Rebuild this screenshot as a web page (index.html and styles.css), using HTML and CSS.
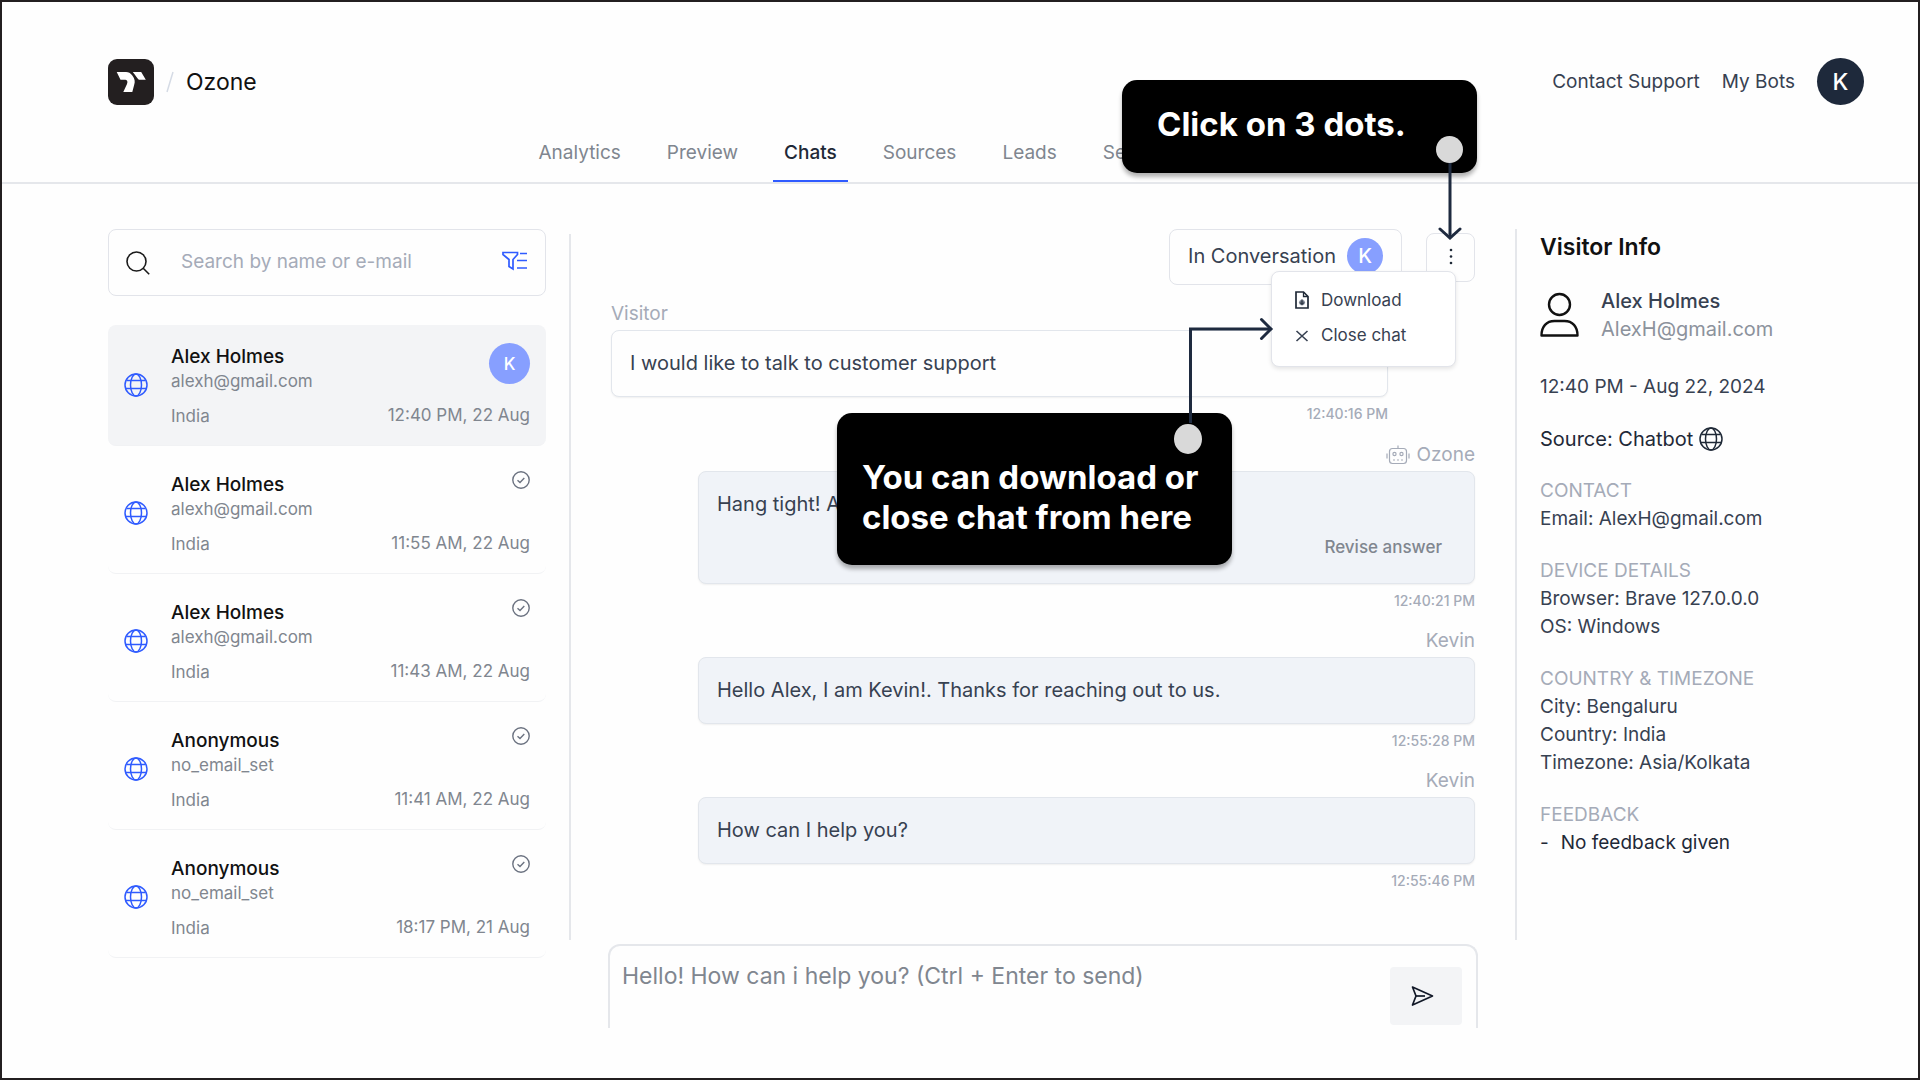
FILE: index.html
```html
<!DOCTYPE html>
<html lang="en">
<head>
<meta charset="utf-8">
<meta name="viewport" content="width=device-width, initial-scale=1">
<title>Ozone - Chats</title>
<link rel="stylesheet" href="styles.css">
</head>
<body>
<svg class="sprite" aria-hidden="true">
  <symbol id="globe" viewBox="0 0 24 24">
    <g fill="none" stroke="currentColor" stroke-width="1.500">
      <circle cx="12" cy="12" r="11"/>
      <ellipse cx="12" cy="12" rx="5.500" ry="11"/>
      <path d="M2.500 7.500h19M1.500 15.500h21"/>
    </g>
  </symbol>
  <symbol id="done" viewBox="0 0 18 18">
    <g fill="none" stroke="currentColor" stroke-width="1.400">
      <circle cx="9" cy="9" r="8.200"/>
      <path d="M5.500 9.200l2.500 2.300 4.300-4.500"/>
    </g>
  </symbol>
</svg>
<header class="header">
  <div class="topbar">
    <a class="brand" href="#" aria-label="Home">
      <svg class="logo" viewBox="0 0 46 46">
        <rect width="46" height="46" rx="9" fill="#231f20"/>
        <path d="M8.700 13H18c2.500 0 4.500 1 6.500 3.800 2.300 3.200 2.800 5.700 1.700 9L24.300 33h-9l3.700-8c.9-2 .3-4.200-1.500-4.200H12.500z" fill="#fff"/>
        <path d="M24.800 13h8.400l4.600 7.800h-6.600c-1.700-.8-3.200-4-6.400-7.800z" fill="#fff"/>
      </svg>
    </a>
    <svg class="slash" viewBox="0 0 8 22"><path d="M7 1L1 21" stroke="#d5dbe5" stroke-width="1.500"/></svg>
    <span class="bot-name">Ozone</span>
    <nav class="account">
      <a href="#">Contact Support</a>
      <a href="#">My Bots</a>
      <button class="avatar" type="button">K</button>
    </nav>
  </div>
  <nav class="tabs">
    <a href="#">Analytics</a>
    <a href="#">Preview</a>
    <a class="active" href="#">Chats</a>
    <a href="#">Sources</a>
    <a href="#">Leads</a>
    <a href="#">Settings</a>
  </nav>
</header>
<main class="main">
  <aside class="sidebar">
    <div class="search">
      <svg class="search-icon" viewBox="0 0 24 24" fill="none" stroke="#1a1a1a" stroke-width="1.600"><circle cx="10.500" cy="10.500" r="9.500"/><path d="M17.200 17.200l6 6"/></svg>
      <input type="text" aria-label="Search chats" placeholder="Search by name or e-mail">
      <button class="filter" type="button" aria-label="Filter">
        <svg viewBox="0 0 26 20" fill="none" stroke="#2f5bff" stroke-width="1.700"><path d="M1 1.500h14.500v2L11 8.500V18L7 15.500v-7L1 3.500z"/><path d="M18 2.500h7M15 9.500h10M15 17h10"/></svg>
      </button>
    </div>
    <ul class="chats">
      <li class="chat selected">
        <svg class="globe"><use href="#globe"/></svg>
        <div class="who"><strong>Alex Holmes</strong><span>alexh@gmail.com</span><span class="place">India</span></div>
        <div class="state"><span class="badge">K</span><time>12:40 PM, 22 Aug</time></div>
      </li>
      <li class="chat">
        <svg class="globe"><use href="#globe"/></svg>
        <div class="who"><strong>Alex Holmes</strong><span>alexh@gmail.com</span><span class="place">India</span></div>
        <div class="state"><svg class="done"><use href="#done"/></svg><time>11:55 AM, 22 Aug</time></div>
      </li>
      <li class="chat">
        <svg class="globe"><use href="#globe"/></svg>
        <div class="who"><strong>Alex Holmes</strong><span>alexh@gmail.com</span><span class="place">India</span></div>
        <div class="state"><svg class="done"><use href="#done"/></svg><time>11:43 AM, 22 Aug</time></div>
      </li>
      <li class="chat">
        <svg class="globe"><use href="#globe"/></svg>
        <div class="who"><strong>Anonymous</strong><span>no_email_set</span><span class="place">India</span></div>
        <div class="state"><svg class="done"><use href="#done"/></svg><time>11:41 AM, 22 Aug</time></div>
      </li>
      <li class="chat">
        <svg class="globe"><use href="#globe"/></svg>
        <div class="who"><strong>Anonymous</strong><span>no_email_set</span><span class="place">India</span></div>
        <div class="state"><svg class="done"><use href="#done"/></svg><time>18:17 PM, 21 Aug</time></div>
      </li>
    </ul>
  </aside>
  <section class="thread">
    <div class="toolbar">
      <div class="status">In Conversation <span class="badge">K</span></div>
      <button class="more" type="button" aria-label="More options">
        <svg viewBox="0 0 4 18" fill="#1f2937"><circle cx="2" cy="2" r="1.300"/><circle cx="2" cy="8.500" r="1.300"/><circle cx="2" cy="15" r="1.300"/></svg>
      </button>
      <div class="menu">
        <button type="button">
          <svg viewBox="0 0 14 18" fill="none" stroke="#1f2937" stroke-width="1.700"><path d="M1 1h7.500L13 5.500V17H1z"/><path d="M8.500 1v4.500H13" stroke-width="1.300"/><circle cx="7" cy="11.500" r="2.600" fill="#6b7280" stroke="#9ca3af" stroke-width="1"/><path d="M7 8.500v5M5 11.500l2 2 2-2" stroke-width="1"/></svg>
          Download
        </button>
        <button type="button">
          <svg viewBox="0 0 14 18" fill="none" stroke="#374151" stroke-width="1.600"><path d="M1.500 5l11 10M12.500 5l-11 10"/></svg>
          Close chat
        </button>
      </div>
      <div class="callout callout-dots">Click on 3 dots.</div>
      <div class="callout callout-menu">You can download or<br>close chat from here</div>
      <svg class="arrow arrow-dots" viewBox="0 0 28 104" fill="none" stroke="#1e2a3f" stroke-width="3"><path d="M14 26v75"/><path d="M4 93l10 9 10-9" stroke-linecap="round"/><circle cx="13.500" cy="13.500" r="13.500" fill="#d9d9d9" stroke="none"/></svg>
      <svg class="arrow arrow-menu" viewBox="0 0 100 140" fill="none" stroke="#1e2a3f" stroke-width="3"><path d="M16.500 107V13H97"/><path d="M87.500 3.500L97 13 87.500 22.500" stroke-linecap="round"/><ellipse cx="14" cy="123" rx="14" ry="15" fill="#d9d9d9" stroke="none"/></svg>
    </div>
    <article class="message visitor">
      <h3>Visitor</h3>
      <p class="bubble">I would like to talk to customer support</p>
      <time>12:40:16 PM</time>
    </article>
    <article class="message">
      <h3><svg class="robot" viewBox="0 0 24 20" fill="none" stroke="currentColor" stroke-width="1.200"><rect x="3.500" y="3.500" width="17" height="15" rx="3"/><path d="M12 .5v3M1 8.500v5M23 8.500v5M7 15h2M11 15h2M15 15h2"/><circle cx="8.500" cy="9" r="1.600"/><circle cx="15.500" cy="9" r="1.600"/></svg>Ozone</h3>
      <div class="bubble">
        <p>Hang tight! A</p>
        <button class="revise" type="button">Revise answer</button>
      </div>
      <time>12:40:21 PM</time>
    </article>
    <article class="message">
      <h3>Kevin</h3>
      <p class="bubble">Hello Alex, I am Kevin!. Thanks for reaching out to us.</p>
      <time>12:55:28 PM</time>
    </article>
    <article class="message">
      <h3>Kevin</h3>
      <p class="bubble">How can I help you?</p>
      <time>12:55:46 PM</time>
    </article>
  </section>
  <aside class="info">
    <h2>Visitor Info</h2>
    <div class="person">
      <svg viewBox="0 0 40 46" fill="none" stroke="#111" stroke-width="2.400"><circle cx="19.500" cy="12.500" r="10.500"/><path d="M1.500 43.500c0-9 5-14.500 13-14.500h10c8 0 13 5.500 13 14.500z" stroke-linejoin="round"/></svg>
      <div><strong>Alex Holmes</strong><span>AlexH@gmail.com</span></div>
    </div>
    <p>12:40 PM - Aug 22, 2024</p>
    <p class="source">Source: Chatbot <svg class="globe"><use href="#globe"/></svg></p>
    <section><h3>CONTACT</h3><p>Email: AlexH@gmail.com</p></section>
    <section><h3>DEVICE DETAILS</h3><p>Browser: Brave 127.0.0.0</p><p>OS: Windows</p></section>
    <section><h3>COUNTRY &amp; TIMEZONE</h3><p>City: Bengaluru</p><p>Country: India</p><p>Timezone: Asia/Kolkata</p></section>
    <section><h3>FEEDBACK</h3><p class="feedback"><span>-</span><span>No feedback given</span></p></section>
  </aside>
  <form class="composer">
    <textarea aria-label="Message" placeholder="Hello! How can i help you? (Ctrl + Enter to send)"></textarea>
    <button type="button" aria-label="Send">
      <svg viewBox="0 0 24 22" fill="none" stroke="#111827" stroke-width="1.700" stroke-linejoin="round"><path d="M2.500 2L22.500 11 2.500 20 6 11z"/><path d="M6 11h9"/></svg>
    </button>
  </form>
</main>
</body>
</html>
```
FILE: styles.css
```css
* {
  box-sizing: border-box;
}

body {
  margin: 0;
  min-height: 100vh;
  border: 2px solid #231f20;
  background: #fefefe;
  color: #374151;
  font-family: Inter, "Liberation Sans", sans-serif;
  font-size: 19px;
  line-height: 24px;
}

h2, h3, p, ul {
  margin: 0;
  padding: 0;
  font-size: inherit;
  font-weight: 400;
}

a {
  color: inherit;
  text-decoration: none;
}

button {
  padding: 0;
  border: 0;
  background: none;
  color: inherit;
  font: inherit;
}

svg {
  display: block;
}

.sprite {
  position: absolute;
  width: 0;
  height: 0;
}

/* Header */

.header {
  border-bottom: 2px solid #e5e7eb;
}

.topbar {
  display: flex;
  align-items: center;
  padding: 56px 54px 0 106px;
}

.logo {
  width: 46px;
  height: 46px;
}

.slash {
  width: 8px;
  height: 22px;
  margin: 0 12px;
}

.bot-name {
  color: #111;
  font-size: 23px;
}

.account {
  display: flex;
  align-items: center;
  gap: 22px;
  margin-left: auto;
}

.avatar {
  width: 47px;
  height: 47px;
  border-radius: 50%;
  background: #1e293b;
  color: #fff;
  font-size: 23px;
  font-weight: 500;
}

.tabs {
  display: flex;
  justify-content: center;
  gap: 24px;
  padding-right: 206px;
  margin-top: 23px;
  color: #80868f;
}

.tabs a {
  padding: 13px 11px 15px;
  border-bottom: 2px solid transparent;
}

.tabs .active {
  border-color: #2f5bff;
  color: #1f2937;
  font-weight: 500;
}

/* Page grid */

.main {
  display: grid;
  grid-template-columns: 438px minmax(0, 1fr) 403px;
  grid-template-rows: auto auto;
  padding: 45px 0 50px 106px;
}

.sidebar {
  grid-row: span 2;
}

.badge {
  display: grid;
  place-items: center;
  width: 41px;
  height: 41px;
  border-radius: 50%;
  background: #879fff;
  color: #fff;
  font-weight: 500;
}

/* Chat list */

.search {
  display: flex;
  align-items: center;
  height: 67px;
  padding: 0 17px;
  border: 1px solid #e2e4ea;
  border-radius: 8px;
}

.search-icon {
  flex: none;
  width: 24px;
  height: 24px;
}

.search input {
  flex: 1;
  min-width: 0;
  padding: 0 0 2px 31px;
  border: 0;
  outline: 0;
  background: none;
  font: inherit;
}

.search input::placeholder {
  color: #a5abb8;
}

.filter {
  padding-bottom: 4px;
}

.filter svg {
  width: 26px;
  height: 20px;
}

.chats {
  display: grid;
  gap: 7px;
  margin-top: 29px;
  list-style: none;
}

.chat {
  display: flex;
  align-items: center;
  height: 121px;
  padding: 18px 16px;
  border-bottom: 1px solid #f1f2f4;
  border-radius: 8px;
  color: #80868f;
  font-size: 17px;
}

.selected {
  background: #f3f4f6;
}

.globe {
  width: 24px;
  height: 24px;
}

.chat .globe {
  margin-right: 23px;
  color: #2f5bff;
}

.who {
  display: flex;
  flex: 1;
  flex-direction: column;
  padding-top: 2px;
}

.who strong {
  color: #111;
  font-size: 19px;
  font-weight: 500;
}

.place {
  margin-top: 11px;
}

.state {
  display: flex;
  flex-direction: column;
  align-items: flex-end;
  align-self: stretch;
  justify-content: space-between;
}

.done {
  width: 18px;
  height: 18px;
  color: #6b7280;
}

/* Conversation */

.thread {
  margin: 5px 0 0 23px;
  padding: 0 40px 49px;
  border-left: 2px solid #e5e7eb;
}

.toolbar {
  position: relative;
  display: flex;
  align-items: center;
  justify-content: flex-end;
  gap: 24px;
  margin: -5px 0 17px;
}

.status {
  display: flex;
  align-items: center;
  gap: 11px;
  height: 56px;
  padding: 0 18px 3px;
  border: 1px solid #e2e4ea;
  border-radius: 8px;
  font-size: 20px;
}

.status .badge {
  width: 36px;
  height: 36px;
}

.more {
  display: grid;
  place-items: center;
  width: 49px;
  height: 49px;
  border: 1px solid #e2e4ea;
  border-radius: 8px;
}

.more svg {
  width: 4px;
  height: 18px;
}

.menu {
  position: absolute;
  top: 42px;
  right: 19px;
  display: grid;
  align-content: start;
  gap: 11px;
  width: 185px;
  height: 96px;
  padding: 16px 23px;
  border: 1px solid #e2e4ea;
  border-radius: 8px;
  background: #fff;
  box-shadow: 0 2px 4px rgba(0, 0, 0, .1);
  font-size: 17px;
}

.menu button {
  display: flex;
  align-items: center;
  gap: 12px;
}

.menu svg {
  width: 14px;
  height: 18px;
}

.callout {
  position: absolute;
  border-radius: 15px;
  background: #000;
  box-shadow: 0 4px 4px rgba(0, 0, 0, .3);
  color: #fff;
  font-size: 33px;
  font-weight: 700;
  line-height: 40px;
  white-space: nowrap;
}

.callout-dots {
  top: -149px;
  right: -2px;
  width: 355px;
  height: 93px;
  padding: 24px 35px;
}

.callout-menu {
  top: 184px;
  right: 243px;
  width: 395px;
  height: 152px;
  padding: 44px 25px;
}

.arrow {
  position: absolute;
}

.arrow-dots {
  top: -93px;
  right: 11px;
  width: 28px;
  height: 104px;
}

.arrow-menu {
  top: 87px;
  right: 201px;
  width: 100px;
  height: 140px;
}

.message {
  margin: 0 0 18px 87px;
  text-align: right;
}

.message:last-child {
  margin-bottom: 0;
}

.message.visitor {
  margin: 0 87px 19px 0;
}

.message h3 {
  display: flex;
  align-items: center;
  justify-content: flex-end;
  gap: 7px;
  margin-bottom: 4px;
  color: #a5abb8;
}

.message.visitor h3 {
  justify-content: flex-start;
}

.robot {
  width: 24px;
  height: 20px;
}

.bubble {
  padding: 20px 18px 21px;
  border: 1px solid #e2e6ec;
  border-radius: 8px;
  background: #f0f3f8;
  box-shadow: 0 1px 2px rgba(0, 0, 0, .06);
  font-size: 20px;
  text-align: left;
}

.visitor .bubble {
  background: #fefefe;
}

.revise {
  display: block;
  margin: 19px 14px 3px auto;
  color: #80868f;
  font-size: 17px;
  font-weight: 500;
}

.message time {
  display: block;
  margin-top: 7px;
  color: #a5abb8;
  font-size: 14px;
  font-weight: 500;
  line-height: 20px;
}

.composer {
  display: flex;
  grid-column: 2;
  height: 84px;
  margin: 4px 37px 0 62px;
  border: 2px solid #e5e7eb;
  border-bottom: 0;
  border-radius: 12px 12px 0 0;
}

.composer textarea {
  flex: 1;
  padding: 16px 12px;
  border: 0;
  outline: 0;
  background: none;
  font: inherit;
  font-size: 23px;
  line-height: 28px;
  resize: none;
}

.composer textarea::placeholder {
  color: #80868f;
}

.composer button {
  display: grid;
  place-items: center;
  width: 72px;
  height: 58px;
  margin: 21px 14px 0 0;
  padding-right: 8px;
  border-radius: 4px;
  background: #f3f4f6;
}

.composer svg {
  width: 24px;
  height: 22px;
}

/* Visitor details */

.info {
  display: flex;
  flex-direction: column;
  gap: 24px;
  padding: 4px 0 0 23px;
  border-left: 2px solid #e5e7eb;
  line-height: 28px;
}

.info h2 {
  margin-bottom: 2px;
  color: #111;
  font-size: 23px;
  font-weight: 600;
}

.person {
  display: flex;
  align-items: center;
  gap: 21px;
  margin-bottom: 6px;
  font-size: 20px;
}

.person svg {
  width: 40px;
  height: 46px;
}

.person strong,
.person span {
  display: block;
}

.person strong {
  font-weight: 500;
}

.person span {
  color: #8c929c;
}

.source {
  display: flex;
  align-items: center;
  gap: 6px;
  color: #1f2937;
  font-size: 20px;
}

.info h3 {
  color: #a5abb8;
}

.feedback {
  display: flex;
  gap: 12px;
  color: #1f2937;
}
```
